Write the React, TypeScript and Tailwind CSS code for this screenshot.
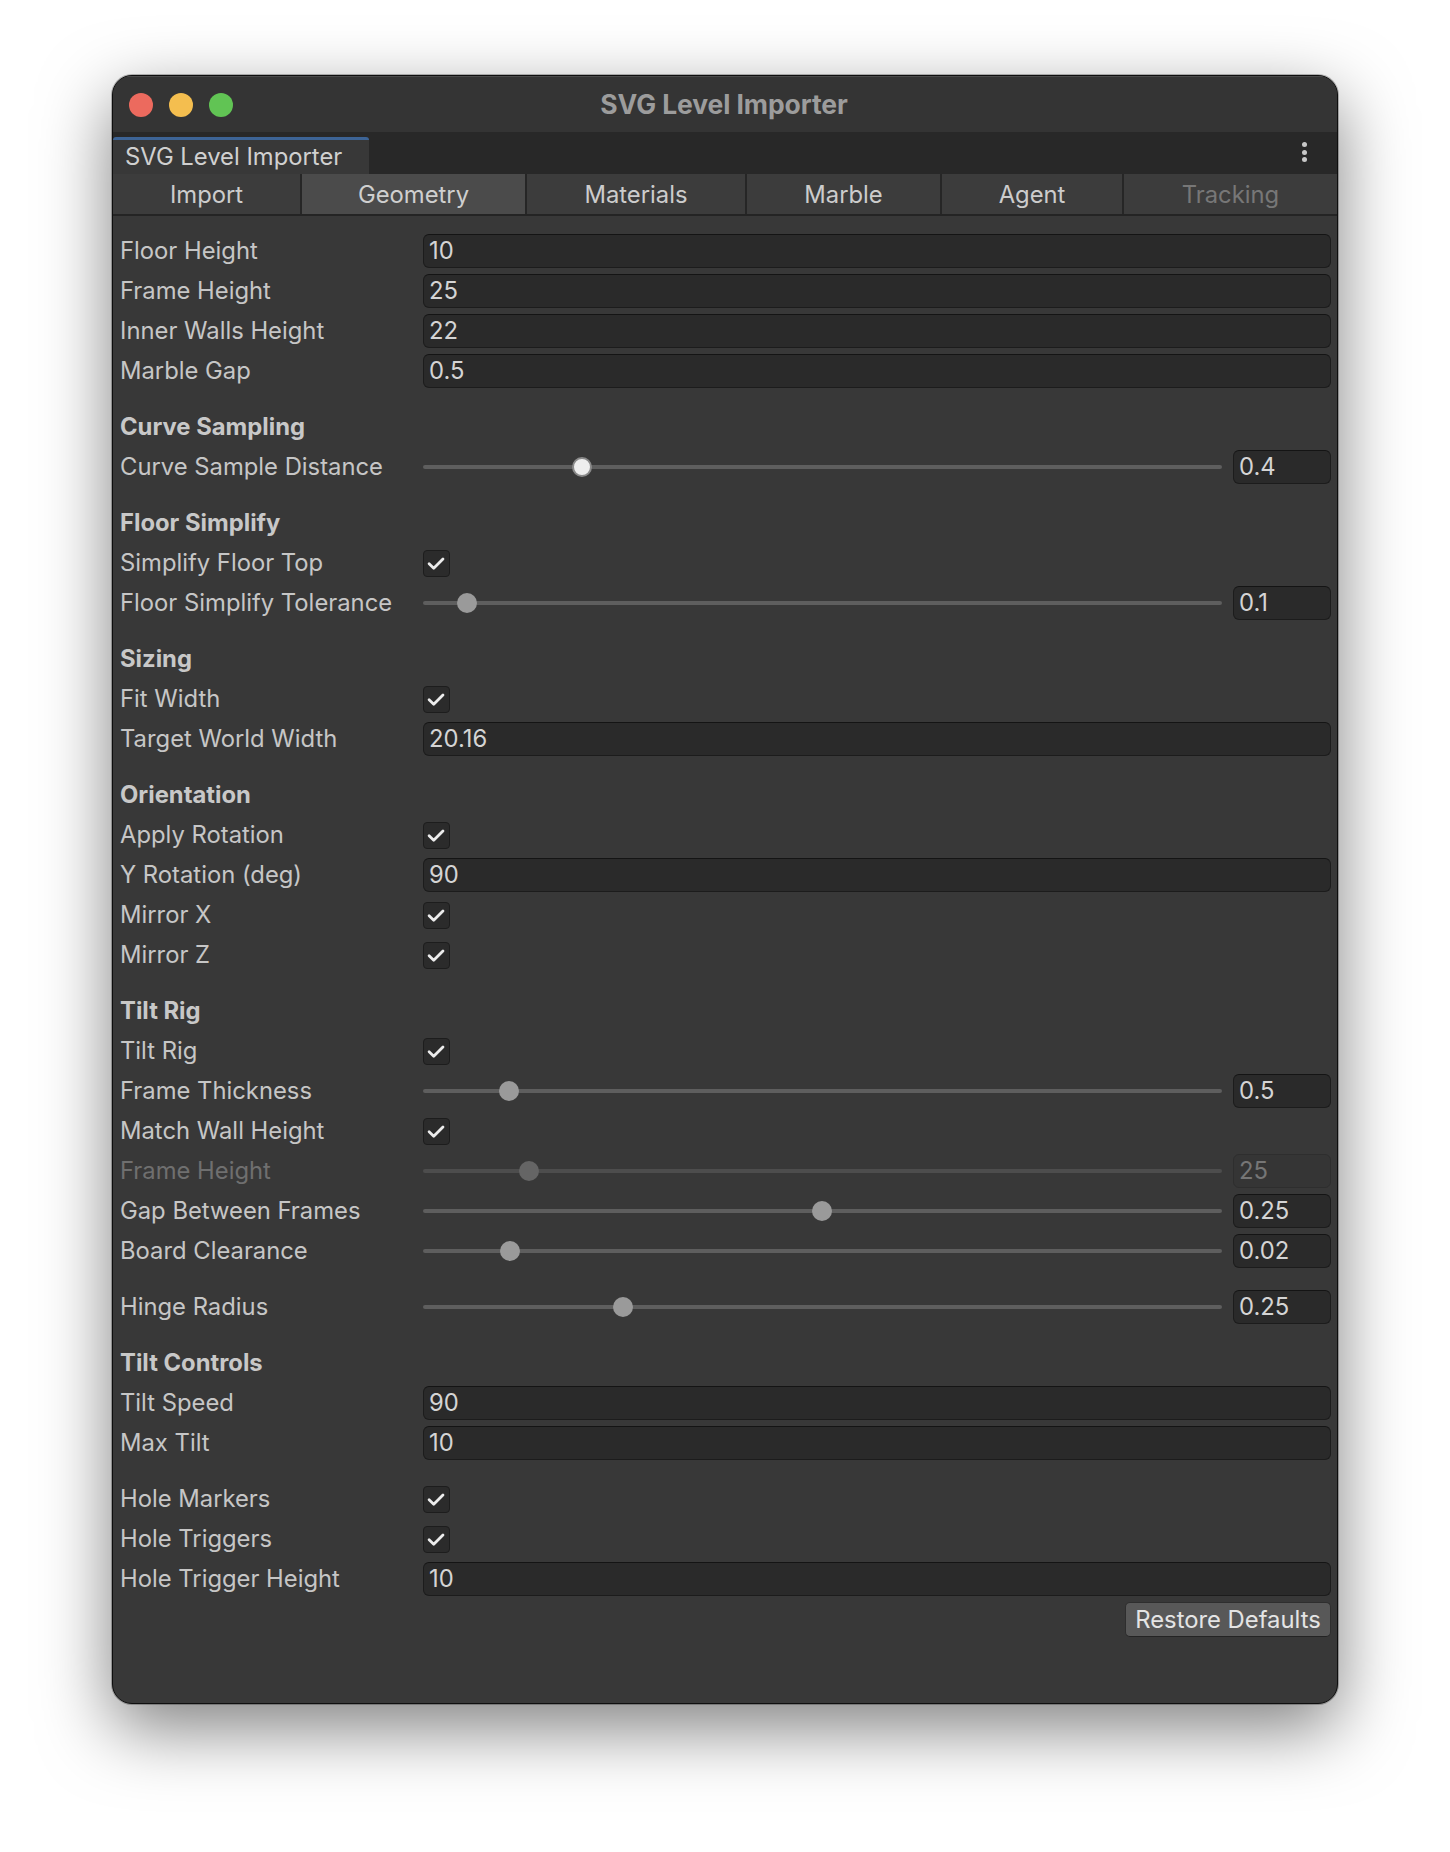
import React from 'react';

type Item =
  | { kind: 'field'; label: string; value: string }
  | { kind: 'slider'; label: string; value: string; pos: number; active?: boolean; disabled?: boolean }
  | { kind: 'check'; label: string }
  | { kind: 'header'; label: string }
  | { kind: 'space' };

// pos = thumb centre in px from the left end of the track
const items: Item[] = [
  { kind: 'field', label: 'Floor Height', value: '10' },
  { kind: 'field', label: 'Frame Height', value: '25' },
  { kind: 'field', label: 'Inner Walls Height', value: '22' },
  { kind: 'field', label: 'Marble Gap', value: '0.5' },
  { kind: 'space' },
  { kind: 'header', label: 'Curve Sampling' },
  { kind: 'slider', label: 'Curve Sample Distance', value: '0.4', pos: 159, active: true },
  { kind: 'space' },
  { kind: 'header', label: 'Floor Simplify' },
  { kind: 'check', label: 'Simplify Floor Top' },
  { kind: 'slider', label: 'Floor Simplify Tolerance', value: '0.1', pos: 44 },
  { kind: 'space' },
  { kind: 'header', label: 'Sizing' },
  { kind: 'check', label: 'Fit Width' },
  { kind: 'field', label: 'Target World Width', value: '20.16' },
  { kind: 'space' },
  { kind: 'header', label: 'Orientation' },
  { kind: 'check', label: 'Apply Rotation' },
  { kind: 'field', label: 'Y Rotation (deg)', value: '90' },
  { kind: 'check', label: 'Mirror X' },
  { kind: 'check', label: 'Mirror Z' },
  { kind: 'space' },
  { kind: 'header', label: 'Tilt Rig' },
  { kind: 'check', label: 'Tilt Rig' },
  { kind: 'slider', label: 'Frame Thickness', value: '0.5', pos: 86 },
  { kind: 'check', label: 'Match Wall Height' },
  { kind: 'slider', label: 'Frame Height', value: '25', pos: 106, disabled: true },
  { kind: 'slider', label: 'Gap Between Frames', value: '0.25', pos: 399 },
  { kind: 'slider', label: 'Board Clearance', value: '0.02', pos: 87 },
  { kind: 'space' },
  { kind: 'slider', label: 'Hinge Radius', value: '0.25', pos: 200 },
  { kind: 'space' },
  { kind: 'header', label: 'Tilt Controls' },
  { kind: 'field', label: 'Tilt Speed', value: '90' },
  { kind: 'field', label: 'Max Tilt', value: '10' },
  { kind: 'space' },
  { kind: 'check', label: 'Hole Markers' },
  { kind: 'check', label: 'Hole Triggers' },
  { kind: 'field', label: 'Hole Trigger Height', value: '10' },
];

const tabs = [
  { name: 'Import', w: 'w-[187px]' },
  { name: 'Geometry', w: 'w-[225px]', selected: true },
  { name: 'Materials', w: 'w-[220px]' },
  { name: 'Marble', w: 'w-[195px]' },
  { name: 'Agent', w: 'w-[182px]' },
  { name: 'Tracking', w: 'flex-1', dim: true },
];

const Label = ({ text, disabled }: { text: string; disabled?: boolean }) => (
  <div className={`w-[303px] shrink-0 ${disabled ? 'text-[#6f6f6f]' : 'text-[#c6c6c6]'}`}>{text}</div>
);

const Field = ({ value, disabled, className = '' }: { value: string; disabled?: boolean; className?: string }) => (
  <div
    className={`h-[34px] rounded-[6px] border flex items-center pl-[5px] ${className} ${
      disabled
        ? 'bg-[#353535] border-[#2e2e2e] text-[#767676]'
        : 'bg-[#2a2a2a] border-[#1c1c1c] border-t-[#141414] text-[#d4d4d4]'
    }`}
  >
    {value}
  </div>
);

const Check = () => (
  <div className="w-[27px] h-[27px] rounded-[4px] bg-[#2b2b2b] border border-[#1d1d1d] flex items-center justify-center">
    <svg width="27" height="27" viewBox="0 0 27 27" fill="none">
      <polyline points="5.5,13.8 10.5,18.6 20.5,8.6" stroke="#ececec" strokeWidth="3" strokeLinecap="round" strokeLinejoin="round" />
    </svg>
  </div>
);

const Slider = ({ pos, active, disabled }: { pos: number; active?: boolean; disabled?: boolean }) => (
  <div className="relative flex-1 h-[34px] flex items-center">
    <div className={`w-full h-[4px] rounded-full ${disabled ? 'bg-[#4d4d4d]' : 'bg-[#5e5e5e]'}`} />
    <div
      className={`absolute top-[7px] w-[20px] h-[20px] rounded-full ${
        active
          ? 'bg-[#eeeeee] border-2 border-[#8a8a8a]'
          : disabled
          ? 'bg-[#656565]'
          : 'bg-[#9a9a9a]'
      }`}
      style={{ left: pos - 10 }}
    />
  </div>
);

const Row = ({ item }: { item: Item }) => {
  if (item.kind === 'space') return <div className="h-[16px]" />;
  if (item.kind === 'header')
    return <div className="h-[40px] flex items-center font-bold text-[#c8c8c8]">{item.label}</div>;
  return (
    <div className="h-[40px] flex items-center">
      <Label text={item.label} disabled={item.kind === 'slider' && item.disabled} />
      {item.kind === 'field' && <Field value={item.value} className="flex-1" />}
      {item.kind === 'check' && <Check />}
      {item.kind === 'slider' && (
        <div className="flex-1 flex items-center gap-[11px]">
          <Slider pos={item.pos} active={item.active} disabled={item.disabled} />
          <Field value={item.value} disabled={item.disabled} className="w-[98px]" />
        </div>
      )}
    </div>
  );
};

export default function App() {
  return (
    <div className="min-h-[1852px] bg-white pt-[75px] pl-[112px] font-['Inter','Noto_Sans',sans-serif]">
      <div className="w-[1226px] h-[1629px] rounded-[20px] bg-[#383838] border border-[#0e0e0e] overflow-hidden flex flex-col shadow-[0_24px_70px_rgba(0,0,0,0.5),0_0_0_1px_rgba(0,0,0,0.25)]">
        {/* title bar */}
        <div className="relative h-[56px] shrink-0 bg-[#343434] flex items-center border-t border-[#4a4a4a]">
          <div className="flex gap-[16px] pl-[16px]">
            <div className="w-[24px] h-[24px] rounded-full bg-[#ec6a5e]" />
            <div className="w-[24px] h-[24px] rounded-full bg-[#f4be4f]" />
            <div className="w-[24px] h-[24px] rounded-full bg-[#61c454]" />
          </div>
          <div className="absolute inset-0 flex items-center justify-center text-[26.5px] font-bold text-[#9c9c9c] tracking-[-0.1px] pr-[2px]">
            SVG Level Importer
          </div>
        </div>

        {/* window tab strip */}
        <div className="h-[42px] shrink-0 bg-[#282828] flex items-end justify-between">
          <div className="w-[256px] h-[37px] bg-[#383838] border-t-[3px] border-[#3d6496] rounded-t-[3px] flex items-center pl-[12px] text-[23.8px] text-[#d0d0d0]">
            SVG Level Importer
          </div>
          <div className="h-full flex flex-col justify-center gap-[2.5px] pr-[30px] pb-[2px]">
            <div className="w-[5px] h-[5px] rounded-full bg-[#c8c8c8]" />
            <div className="w-[5px] h-[5px] rounded-full bg-[#c8c8c8]" />
            <div className="w-[5px] h-[5px] rounded-full bg-[#c8c8c8]" />
          </div>
        </div>

        {/* toolbar tabs */}
        <div className="h-[42px] shrink-0 flex border-b-[2px] border-[#242424] bg-[#3c3c3c]">
          {tabs.map((t, i) => (
            <div
              key={t.name}
              className={`${t.w} h-full flex items-center justify-center text-[23.8px] pt-[2px] ${
                i > 0 ? 'border-l-[2px] border-[#262626]' : ''
              } ${t.selected ? 'bg-[#4b4b4b] text-[#cfcfcf]' : 'bg-[#3c3c3c]'} ${
                t.dim ? 'text-[#777777]' : t.selected ? '' : 'text-[#cccccc]'
              }`}
            >
              {t.name}
            </div>
          ))}
        </div>

        {/* inspector body */}
        <div className="flex-1 pt-[15px] pl-[7px] pr-[6px] text-[23.8px] leading-none">
          {items.map((it, i) => (
            <Row key={i} item={it} />
          ))}
          <div className="flex justify-end pt-[3px]">
            <button className="h-[35px] w-[206px] rounded-[5px] bg-[#585858] border border-[#2e2e2e] border-b-[#242424] text-[#e4e4e4] text-[23.8px] flex items-center justify-center">
              Restore Defaults
            </button>
          </div>
        </div>
      </div>
    </div>
  );
}
